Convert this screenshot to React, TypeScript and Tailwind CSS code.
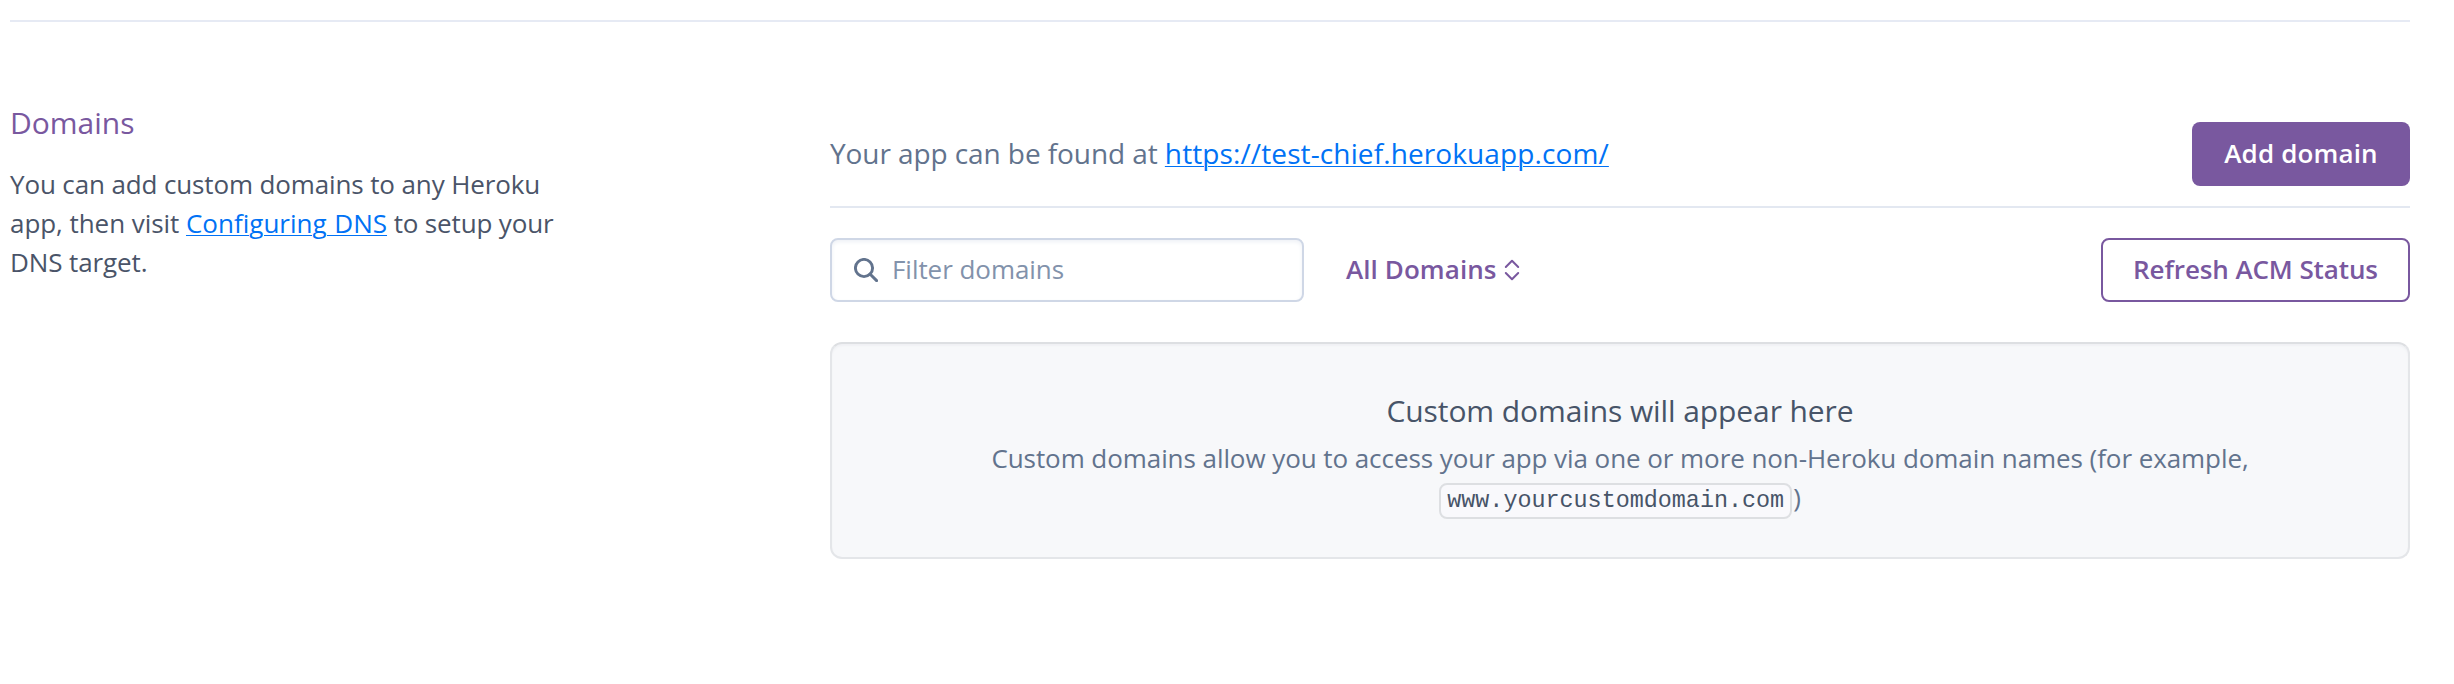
import type { ReactNode } from "react";

function SearchIcon() {
  return (
    <svg width="24" height="24" viewBox="0 0 24 24" fill="none" stroke="#62738d" strokeWidth="2.9" className="shrink-0">
      <circle cx="10" cy="10" r="8.6" />
      <path d="M16 16 22.6 22.6" strokeLinecap="round" />
    </svg>
  );
}

function SortIcon() {
  return (
    <svg width="16" height="22" viewBox="0 0 16 22" fill="none" stroke="#79589f" strokeWidth="2" strokeLinejoin="round" strokeLinecap="round">
      <path d="M1.8 8 8 1.8 14.2 8" />
      <path d="M1.8 14 8 20.2 14.2 14" />
    </svg>
  );
}

function Link({ className = "", children }: { className?: string; children: ReactNode }) {
  return (
    <a href="#" className={`text-[#0072f5] underline decoration-1 underline-offset-[2px] ${className}`}>
      {children}
    </a>
  );
}

export default function App() {
  return (
    <div className="h-[684px] w-[2454px] overflow-hidden bg-white pr-[44px] pl-[10px] pt-5 font-['Open_Sans',sans-serif] text-[26px] leading-[39px] text-[#4a5468]">
      <div className="flex border-t-2 border-[#e6eaf4]">
        <aside className="w-[820px] shrink-0 pt-[78px]">
          <h2 className="text-[30px] leading-[45px] text-[#79589f]">Domains</h2>
          <p className="mt-5 whitespace-nowrap">
            <span className="tracking-[-0.13px]">You can add custom domains to any Heroku</span>
            <br />
            <span className="tracking-[-0.05px]">app, then visit </span>
            <Link className="[word-spacing:1px]">Configuring DNS</Link>
            <span className="tracking-[-0.15px]"> to setup your</span>
            <br />
            <span className="tracking-[-0.1px]">DNS target.</span>
          </p>
        </aside>

        <main className="w-[1580px] shrink-0 pt-[100px]">
          <div className="flex items-center justify-between border-b-2 border-[#e3e8f1] pb-5">
            <p className="pb-[2px] text-[28px] text-[#62738d]">
              <span className="tracking-[-0.08px]">Your app can be found at </span>
              <Link className="tracking-[0.11px]">https://test-chief.herokuapp.com/</Link>
            </p>
            <button className="flex h-16 w-[218px] items-center justify-center rounded-lg bg-[#79589f] pb-[2px] font-semibold tracking-[0.15px] text-white">
              Add domain
            </button>
          </div>

          <div className="mt-[30px] flex items-center">
            <div className="flex h-16 w-[474px] items-center rounded-lg border-2 border-[#cfd7e6] bg-white pl-[22px] shadow-[inset_0_2px_4px_#eef1f6]">
              <SearchIcon />
              <span className="pb-[2px] pl-[14px] tracking-[-0.05px] text-[#8292ab]">Filter domains</span>
            </div>
            <button className="ml-[42px] flex items-center gap-[7px] font-semibold text-[#79589f]">
              <span className="pb-[2px] tracking-[0.08px]">All Domains</span>
              <SortIcon />
            </button>
            <button className="ml-auto flex h-16 w-[309px] items-center justify-center rounded-lg border-2 border-[#79589f] pb-[2px] font-semibold tracking-[-0.1px] text-[#79589f]">
              Refresh ACM Status
            </button>
          </div>

          <section className="mt-10 h-[217px] rounded-[12px] border-2 border-[#e4e6e9] border-t-[#dddfe2] bg-[#f7f8fa] pt-11 text-center shadow-[inset_0_2px_2px_#f0f1f4]">
            <h3 className="text-[30px] leading-[45px] tracking-[-0.09px] text-[#475468]">Custom domains will appear here</h3>
            <p className="mt-[6px] whitespace-nowrap tracking-[-0.07px] text-[#62738d]">
              Custom domains allow you to access your app via one or more non-Heroku domain names (for example,
              <br />
              <code className="mr-px rounded-lg border-2 border-[#dddfe2] bg-[#f9f9fc] px-[6px] py-[3px] font-['Liberation_Mono',monospace] text-[23.4px] tracking-normal text-[#475468]">
                www.yourcustomdomain.com
              </code>
              )
            </p>
          </section>
        </main>
      </div>
    </div>
  );
}
